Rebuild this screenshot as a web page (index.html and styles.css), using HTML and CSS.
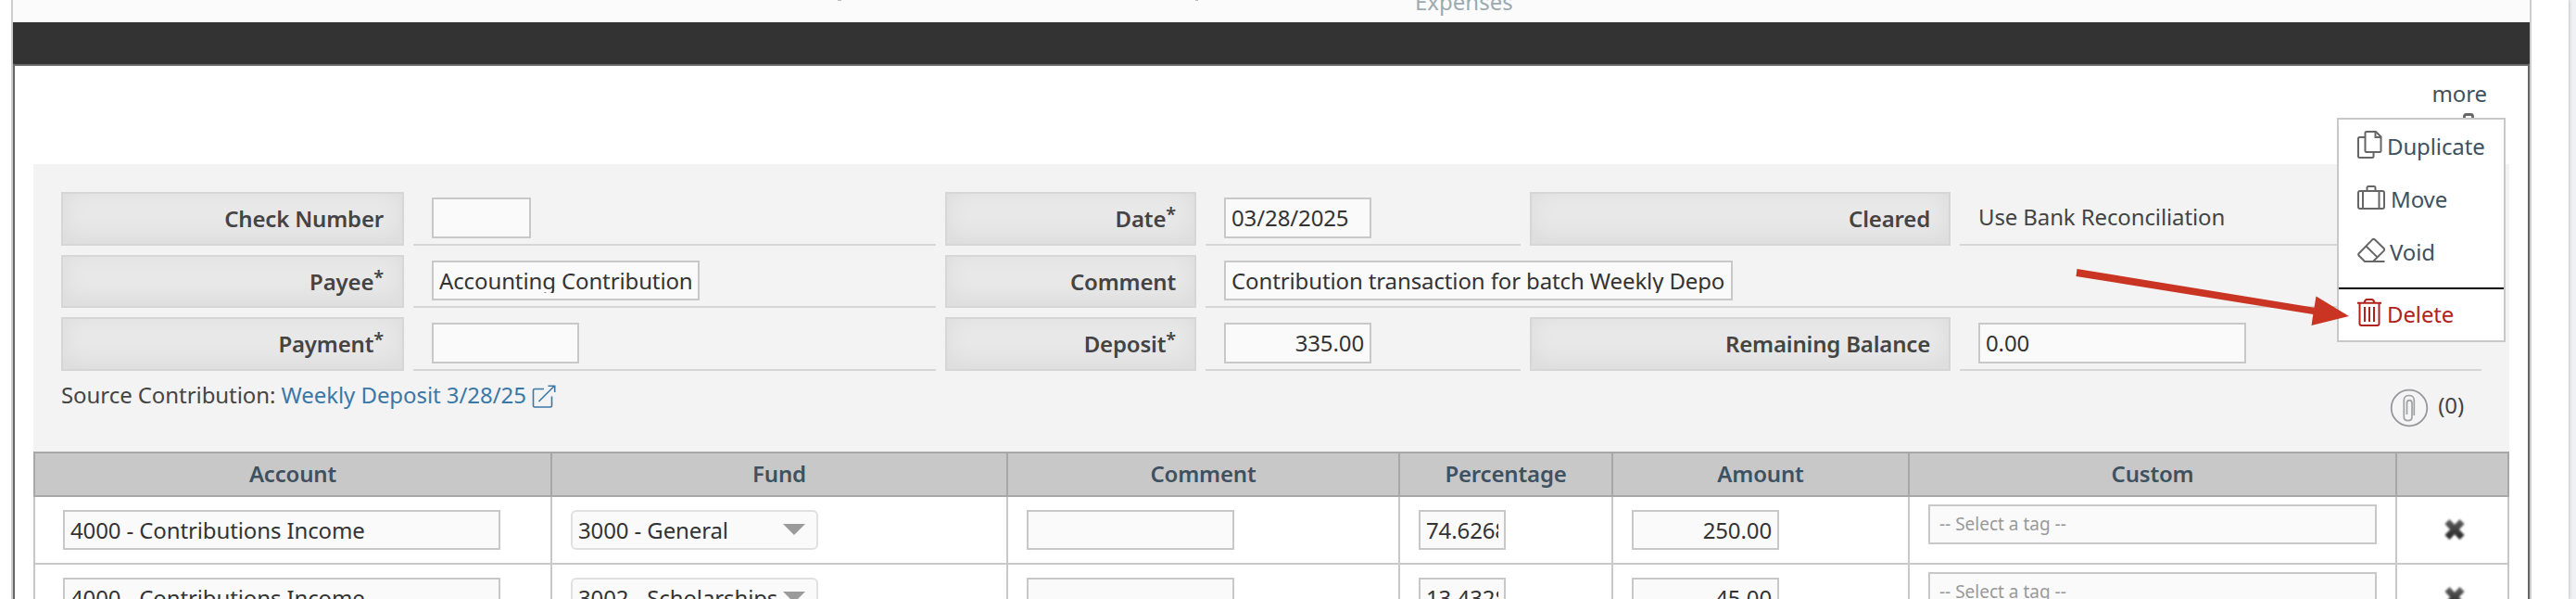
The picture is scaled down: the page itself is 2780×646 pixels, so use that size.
FILE: index.html
```html
<!DOCTYPE html>
<html lang="en">
<head>
<meta charset="utf-8">
<title>Transaction</title>
<link rel="stylesheet" href="styles.css">
</head>
<body>
<div class="page">
<div class="frame">
  <div class="tabs"><i class="tail tail-a"></i><i class="tail tail-b"></i><span class="tab">Expenses</span></div>
  <div class="titlebar"></div>
  <div class="panel">
    <div class="toolbar">
      <div class="more">more
        <svg class="more-icon" width="12" height="12" viewBox="0 0 12 12"><path d="M1.500 12V3.500Q1.500 1.500 3.500 1.500H8.500Q10.500 1.500 10.500 3.500V12" fill="none" stroke="#666" stroke-width="2.800"/></svg>
      </div>
      <div class="menu">
        <div class="item dup"><svg width="28" height="32" viewBox="0 0 28 32"><g class="ic"><path d="M9 8H3.500Q2 8 2 9.500V28.500Q2 30 3.500 30H17Q18.500 30 18.500 28.500V24.500"/><path d="M11 2H21L26.500 7.500V22.500Q26.500 24 25 24H11Q9.500 24 9.500 22.500V3.500Q9.500 2 11 2Z"/><path d="M20.500 2V8H26.500"/></g></svg><span>Duplicate</span></div>
        <div class="item move"><svg width="32" height="28" viewBox="0 0 32 28"><g class="ic"><rect x="2" y="7" width="28" height="19" rx="2"/><path d="M7 7V26M24.500 7V26M11.500 7V3.500Q11.500 2 13 2H19Q20.500 2 20.500 3.500V7"/></g></svg><span>Move</span></div>
        <div class="item void"><svg width="32" height="28" viewBox="0 0 32 28"><g class="ic"><path d="M30.500 26H9L2.800 19.800Q1.600 18.500 2.800 17.200L17 2.600Q18.500 1.200 20 2.600L29.500 11.800Q30.800 13.200 29.500 14.600L18 26M10.500 9.500L22.800 21.600"/></g></svg><span>Void</span></div>
        <div class="item delete"><svg width="28" height="32" viewBox="0 0 28 32"><g class="ic"><path d="M1 5.800H27M3.500 5.800V28Q3.500 30 5.500 30H22.500Q24.500 30 24.500 28V5.800M8.500 5.800Q9 2 11.500 2H16.500Q19 2 19.500 5.800M9 10V26M14 10V26M19 10V26"/></g></svg><span>Delete</span></div>
      </div>
    </div>
    <div class="form">
      <div class="fields">
        <div class="label">Check Number</div><div class="value"><div class="field w107"></div></div>
        <div class="label">Date<sup>*</sup></div><div class="value"><div class="field w159"><span>03/28/2025</span></div></div>
        <div class="label">Cleared</div><div class="value text">Use Bank Reconciliation</div>
        <div class="label">Payee<sup>*</sup></div><div class="value"><div class="field short w289"><span>Accounting Contribution</span></div></div>
        <div class="label">Comment</div><div class="value wide"><div class="field short w549"><span>Contribution transaction for batch Weekly Depo</span></div></div>
        <div class="label">Payment<sup>*</sup></div><div class="value"><div class="field w159"></div></div>
        <div class="label">Deposit<sup>*</sup></div><div class="value"><div class="field w159 num"><span>335.00</span></div></div>
        <div class="label">Remaining Balance</div><div class="value"><div class="field w289"><span>0.00</span></div></div>
      </div>
      <div class="below">
        <div class="source">Source Contribution: <a>Weekly Deposit 3/28/25</a><svg class="ext" width="26" height="26" viewBox="0 0 26 26"><path d="M13 4.500H3Q1.500 4.500 1.500 6V22.500Q1.500 24 3 24H20Q21.500 24 21.500 22.500V12.500M7.500 18L24 1.500M17.500 1.200H24.700V8" fill="none" stroke="#3a78a8" stroke-width="1.600"/></svg></div>
        <div class="attach"><svg width="42" height="42" viewBox="0 0 42 42"><circle cx="21" cy="21" r="19.300" fill="#f5f5f5" stroke="#97989c" stroke-width="1.800"/><path d="M26.300 29V12.500C26.300 5.800 15.300 5.800 15.300 12.500V30.500C15.300 36 24 36 24 30.500V16C24 11.500 18.500 11.500 18.500 16V28" fill="none" stroke="#a0a1a5" stroke-width="1.700"/></svg><span>(0)</span></div>
      </div>
    </div>
    <div class="grid head">
      <div>Account</div><div>Fund</div><div>Comment</div><div>Percentage</div><div>Amount</div><div>Custom</div><div></div>
    </div>
    <div class="grid row">
      <div><div class="field short w472"><span>4000 - Contributions Income</span></div></div>
      <div><div class="field short select"><span>3000 - General</span></div></div>
      <div><div class="field short w224"></div></div>
      <div><div class="field short w94"><span>74.6268</span></div></div>
      <div><div class="field short w159 num"><span>250.00</span></div></div>
      <div><div class="field short tag"><span>-- Select a tag --</span></div></div>
      <div><svg class="x" width="26" height="26" viewBox="0 0 26 26"><defs><linearGradient id="xg" gradientUnits="userSpaceOnUse" x1="0" y1="2" x2="0" y2="24"><stop offset="0" stop-color="#606060"/><stop offset="1" stop-color="#222"/></linearGradient></defs><path d="M5 4.500L21 21.500M21 4.500L5 21.500" stroke="url(#xg)" stroke-width="7"/></svg></div>
    </div>
    <div class="grid row">
      <div><div class="field short w472"><span>4000 - Contributions Income</span></div></div>
      <div><div class="field short select"><span>3002 - Scholarships</span></div></div>
      <div><div class="field short w224"></div></div>
      <div><div class="field short w94"><span>13.4328</span></div></div>
      <div><div class="field short w159 num"><span>45.00</span></div></div>
      <div><div class="field short tag"><span>-- Select a tag --</span></div></div>
      <div><svg class="x" width="26" height="26" viewBox="0 0 26 26"><path d="M5 4.500L21 21.500M21 4.500L5 21.500" stroke="url(#xg)" stroke-width="7"/></svg></div>
    </div>
  </div>
</div>
</div>
<svg class="arrow" width="300" height="66" viewBox="0 0 300 66"><path d="M1.500 4L257.500 45.700L259.500 33.500L295 55L254.500 65L256.300 53L0.500 12Z" fill="#c93522"/></svg>
</body>
</html>
```
FILE: styles.css
```css
* { box-sizing: border-box; }
html, body { margin: 0; height: 646px; overflow: hidden; background: #f0f1f4; }
body { position: relative; font: 24px/32px "Noto Sans", "Open Sans", sans-serif; letter-spacing: -.12px; color: #444; }
.page { width: 2772px; height: 646px; padding-left: 12px; background: #fff; box-shadow: 0 0 4px #aaa; }
.frame { width: 2720px; height: 646px; border: solid #ccc; border-width: 0 2px; overflow: hidden; }
.tabs { position: relative; height: 24px; background: #fbfbfb; color: #9caab1; }
.tab { position: absolute; left: 1513px; top: -14px; letter-spacing: 0; }
.tail { position: absolute; top: 0; width: 4px; height: 1px; background: #bbb; }
.tail-a { left: 890px; }
.tail-b { left: 1276px; width: 3px; }
.titlebar { height: 45px; background: #333; }
.panel { height: 700px; border: 2px solid #666; padding: 0 20px; background: #fff; }
.toolbar { position: relative; height: 106px; color: #3e5160; }
.more { position: absolute; right: 24px; top: 14px; }
.more-icon { position: absolute; left: 33px; top: 37px; }
.menu { position: absolute; z-index: 2; left: 2486px; top: 56px; width: 182px; height: 242px; border: 2px solid #c8c8c8; background: #fff; padding: 11px 0 0 19px; }
.item { display: flex; align-items: flex-start; gap: 5px; height: 57px; }
.item svg { flex: none; }
.item span { margin-top: 2px; }
.ic { fill: none; stroke: #666; stroke-width: 2; }
.item.dup { height: 59px; }
.item.move span { margin-top: 0; }
.item.void { gap: 4px; height: 54px; }
.item.void span { margin-top: 0; }
.item.delete { margin-left: -19px; padding: 9px 0 0 19px; border-top: 2px solid #000; color: #b0231a; height: 57px; }
.item.delete .ic { stroke: #b0231a; }
.form { height: 310px; padding: 30px 30px 0; background: #f3f3f3; }
.fields { display: grid; grid-template-columns: 370px 564px 271px 340px 454px 563px; grid-template-rows: 58px 57px 58px; gap: 10px; }
.label { border: 2px solid #d6d6d6; background: #e8e8e8; box-shadow: inset 0 -6px 26px rgba(0,0,0,.06); text-align: right; padding: 11px 20px 0; font-weight: 600; letter-spacing: -.18px; white-space: nowrap; }
.label sup { font-size: 20px; line-height: 0; vertical-align: 7px; }
.value { border-bottom: 2px solid #d6d6d6; padding: 6px 20px 0; }
.value.text { padding-top: 11px; }
.wide { grid-column: 4 / 7; }
.field { height: 44px; border: 2px solid #c8c8c8; background: #fafafa; padding: 6px; color: #333; }
.field.short { height: 43px; }
.field span { display: block; height: 27px; line-height: 27px; overflow: hidden; white-space: nowrap; }
.num { text-align: right; }
.w94 { width: 94px; }
.w107 { width: 107px; }
.w159 { width: 159px; }
.w224 { width: 224px; }
.w289 { width: 289px; }
.w472 { width: 472px; }
.w549 { width: 549px; }
.below { display: flex; justify-content: space-between; padding: 10px 19px 0 0; }
.source { display: flex; align-items: flex-start; white-space: pre; letter-spacing: -.07px; }
.source a { color: #3a78a8; }
.ext { margin: 5px 0 0 6px; }
.attach { display: flex; gap: 10px; padding-top: 9px; }
.attach span { padding-top: 2px; }
.grid { display: grid; grid-template-columns: 558px 492px 423px 230px 320px 526px 123px; }
.grid > div { border-left: 2px solid #c8c8c8; border-bottom: 2px solid #c8c8c8; }
.grid > div:last-child { border-right: 2px solid #c8c8c8; }
.head > div { height: 49px; border-top: 2px solid #a7a7a7; background: #c8c8c8; color: #3e5160; font-weight: 600; letter-spacing: -.18px; text-align: center; padding-top: 6px; }
.head > div, .head > div:last-child { border-color: #a7a7a7; }
.row > div { height: 73px; padding: 14px 0 0 20px; }
.row > div:first-child { padding-left: 30px; }
.field.select { position: relative; width: 267px; border-color: #e0e0e0; border-radius: 6px; }
.field.select::after { content: ""; position: absolute; right: 12px; top: 13px; border: solid transparent; border-width: 12px 12px 0; border-top-color: #9b9b9b; }
.row > div:nth-child(6) { padding-top: 8px; }
.field.tag { width: 484px; color: #999; font-size: 19px; letter-spacing: 0; padding-left: 10px; }
.x { display: block; margin: 8px 0 0 29px; filter: blur(.8px); }
.arrow { position: absolute; z-index: 5; left: 2240px; top: 286px; }
```
